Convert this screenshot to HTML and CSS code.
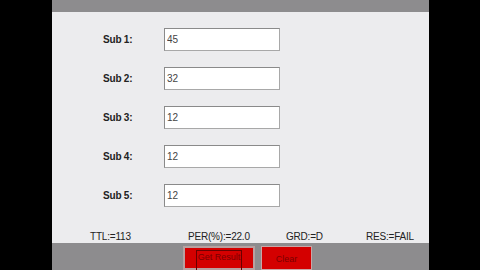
FILE: index.html
```html
<!DOCTYPE html>
<html lang="en">

<head>
  <meta charset="UTF-8">
  <title>marks</title>
  <link rel="stylesheet" href="styles.css">
</head>

<body>
  <div class="screen">
    <div class="title-bar"></div>

    <div class="form">
      <div class="form-row">
        <label class="form-label">Sub 1:</label>
        <input class="form-input" type="text" value="45" />
      </div>
      <div class="form-row">
        <label class="form-label">Sub 2:</label>
        <input class="form-input" type="text" value="32" />
      </div>
      <div class="form-row">
        <label class="form-label">Sub 3:</label>
        <input class="form-input" type="text" value="12" />
      </div>
      <div class="form-row">
        <label class="form-label">Sub 4:</label>
        <input class="form-input" type="text" value="12" />
      </div>
      <div class="form-row">
        <label class="form-label">Sub 5:</label>
        <input class="form-input" type="text" value="12" />
      </div>

      <div class="summary">
        <span>TTL:=113</span>
        <span>PER(%):=22.0</span>
        <span>GRD:=D</span>
        <span>RES:=FAIL</span>
      </div>
    </div>

    <div class="button-bar">
      <button type="button" class="btn btn-focus"><span>Get Result</span></button>
      <button type="button" class="btn">Clear</button>
    </div>
  </div>
</body>

</html>
```

FILE: styles.css
```css
* {
  margin: 0;
  padding: 0;
  box-sizing: border-box;
}

body {
  width: 480px;
  height: 270px;
  overflow: hidden;
  background: #000;
  font-family: "Liberation Sans", Arial, sans-serif;
  padding-left: 52px;
}

.screen {
  width: 377px;
  height: 270px;
  display: flex;
  flex-direction: column;
  background: #ececee;
  overflow: hidden;
}

.title-bar {
  height: 12px;
  background: #8d8c8e;
  flex-shrink: 0;
}

.form {
  height: 242px;
  padding-top: 16px;
  display: flex;
  flex-direction: column;
  gap: 16px;
}

.form-row {
  display: flex;
  align-items: center;
  height: 23px;
}

.form-label {
  width: 112px;
  padding-left: 51px;
  font-size: 10px;
  font-weight: bold;
  letter-spacing: -0.2px;
  color: #222;
}

.form-input {
  width: 116px;
  height: 23px;
  border: 1px solid #a8a8a8;
  border-top-color: #8a8a8a;
  border-left-color: #8a8a8a;
  background: #fff;
  padding-left: 2px;
  font-family: "Liberation Sans", Arial, sans-serif;
  font-size: 10px;
  color: #444;
  outline: none;
}

.summary {
  display: grid;
  grid-template-columns: 98px 98px 80px auto;
  padding-left: 38px;
  margin-top: 8px;
  font-size: 10px;
  letter-spacing: -0.2px;
  color: #222;
}

.button-bar {
  flex: 1;
  background: #8d8c8e;
  display: flex;
  gap: 6px;
  padding: 3px 0 0 131px;
}

.btn {
  height: 24px;
  background: #d40000;
  border: 1px solid #c9a6a6;
  color: #7a0000;
  font-family: "Liberation Sans", Arial, sans-serif;
  font-size: 9px;
  width: 51px;
  padding-top: 2px;
}

.btn-focus {
  width: 72px;
  border: 2px solid #b8a0a0;
  padding: 2px 11px 0;
}

.btn-focus span {
  display: block;
  height: 20px;
  border: 1px solid #6a0000;
  border-bottom: none;
  padding-top: 1px;
  white-space: nowrap;
  overflow: hidden;
}
```
